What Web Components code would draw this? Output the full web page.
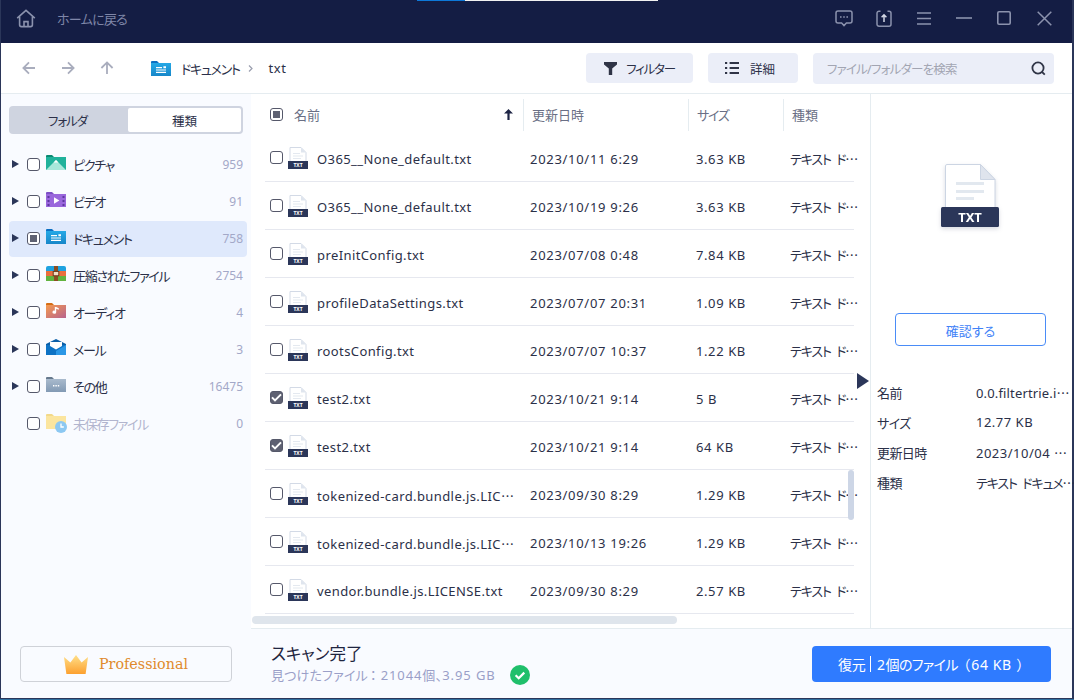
<!DOCTYPE html>
<html lang="ja">
<head>
<meta charset="utf-8">
<title>txt</title>
<style>
  html, body { margin: 0; height: 700px; overflow: hidden; background: #2f6f9f; }
  body {
    font-family: "Noto Sans", "Noto Sans CJK JP", sans-serif; font-size: 13px; color: #2b3048;
    font-feature-settings: "palt";
  }
</style>
</head>
<body>
<app-window>
  <title-bar slot="title"></title-bar>
  <tool-bar slot="tools"></tool-bar>
  <side-pane slot="side">
    <side-item icon="picture" label="ピクチャ" count="959"></side-item>
    <side-item icon="video" label="ビデオ" count="91"></side-item>
    <side-item icon="docs" label="ドキュメント" count="758" active></side-item>
    <side-item icon="zip" label="圧縮されたファイル" count="2754"></side-item>
    <side-item icon="audio" label="オーディオ" count="4"></side-item>
    <side-item icon="mail" label="メール" count="3"></side-item>
    <side-item icon="other" label="その他" count="16475"></side-item>
    <side-item icon="unsaved" label="未保存ファイル" count="0" leaf></side-item>
  </side-pane>
  <file-table slot="table">
    <file-row name="O365__None_default.txt" date="2023/10/11 6:29" size="3.63 KB"></file-row>
    <file-row name="O365__None_default.txt" date="2023/10/19 9:26" size="3.63 KB"></file-row>
    <file-row name="preInitConfig.txt" date="2023/07/08 0:48" size="7.84 KB"></file-row>
    <file-row name="profileDataSettings.txt" date="2023/07/07 20:31" size="1.09 KB"></file-row>
    <file-row name="rootsConfig.txt" date="2023/07/07 10:37" size="1.22 KB"></file-row>
    <file-row name="test2.txt" date="2023/10/21 9:14" size="5 B" checked></file-row>
    <file-row name="test2.txt" date="2023/10/21 9:14" size="64 KB" checked></file-row>
    <file-row name="tokenized-card.bundle.js.LIC⋯" date="2023/09/30 8:29" size="1.29 KB"></file-row>
    <file-row name="tokenized-card.bundle.js.LIC⋯" date="2023/10/13 19:26" size="1.29 KB"></file-row>
    <file-row name="vendor.bundle.js.LICENSE.txt" date="2023/09/30 8:29" size="2.57 KB"></file-row>
  </file-table>
  <detail-pane slot="detail"></detail-pane>
  <scan-footer slot="footer"></scan-footer>
</app-window>

<script>
// todos los iconos en un solo sitio, dibujados a mano
const ICONS = {
  home: `<svg width="20" height="19" viewBox="0 0 20 19" fill="none" stroke="#8b92ad" stroke-width="1.6"><path d="M1.2 9.2 10 1.4l8.8 7.8"/><path d="M3.6 7.6v8.2a1.8 1.8 0 0 0 1.8 1.8h9.2a1.8 1.8 0 0 0 1.8-1.8V7.6"/><path d="M8 17.6v-5h4v5"/></svg>`,
  chat: `<svg width="18" height="17" viewBox="0 0 18 17" fill="none" stroke="#8b92ad" stroke-width="1.5"><path d="M3 1h12a2 2 0 0 1 2 2v8a2 2 0 0 1-2 2h-3.6L9 15.6 6.6 13H3a2 2 0 0 1-2-2V3a2 2 0 0 1 2-2Z"/><path d="M5 7h1.6M8.2 7h1.6M11.4 7H13" stroke-width="1.7"/></svg>`,
  upload: `<svg width="16" height="17" viewBox="0 0 16 17" fill="none" stroke="#8b92ad" stroke-width="1.5"><path d="M4.5 1.2H3A2 2 0 0 0 1 3.2v11a2 2 0 0 0 2 2h10a2 2 0 0 0 2-2v-11a2 2 0 0 0-2-2h-1.500"/><path d="M8 12V5M5.600 7.200 8 4.800l2.400 2.400" stroke="#d5d9e6"/></svg>`,
  menu: `<svg width="14" height="13" viewBox="0 0 14 13" stroke="#8b92ad" stroke-width="1.5"><path d="M0 1h14M0 6.500h14M0 12h14"/></svg>`,
  min: `<svg width="16" height="2" viewBox="0 0 16 2" stroke="#8b92ad" stroke-width="1.6"><path d="M0 1h16"/></svg>`,
  max: `<svg width="14" height="14" viewBox="0 0 14 14" fill="none" stroke="#8b92ad" stroke-width="1.6"><rect x=".8" y=".8" width="12.4" height="12.4" rx="1.2"/></svg>`,
  close: `<svg width="15" height="15" viewBox="0 0 15 15" stroke="#8b92ad" stroke-width="1.5"><path d="m.7.7 13.6 13.6M14.3.7.7 14.3"/></svg>`,
  back: `<svg width="14" height="14" viewBox="0 0 14 14" fill="none" stroke="#a9adbd" stroke-width="1.8"><path d="M13 7H1.500M7 1.400 1.400 7 7 12.600"/></svg>`,
  forward: `<svg width="14" height="14" viewBox="0 0 14 14" fill="none" stroke="#a9adbd" stroke-width="1.8"><path d="M1 7h11.500M7 1.400 12.600 7 7 12.600"/></svg>`,
  up: `<svg width="14" height="14" viewBox="0 0 14 14" fill="none" stroke="#a9adbd" stroke-width="1.8"><path d="M7 13V1.500M1.400 7 7 1.400 12.600 7"/></svg>`,
  chevron: `<svg width="5" height="7" viewBox="0 0 5 7" fill="none" stroke="#9a9eae" stroke-width="1.2"><path d="m1 .5 3 3-3 3"/></svg>`,
  filter: `<svg width="13" height="13" viewBox="0 0 13 13" fill="#2f3446"><path d="M0 0h13v2.600L8.200 6.400V13H4.800V6.400L0 2.600Z"/></svg>`,
  list: `<svg width="14" height="12" viewBox="0 0 14 12" fill="#2f3446"><path d="M0 0h2.200v2H0zM4.600 0H14v2H4.600zM0 5h2.200v2H0zM4.600 5H14v2H4.600zM0 10h2.200v2H0zM4.600 10H14v2H4.600z"/></svg>`,
  search: `<svg width="15" height="15" viewBox="0 0 15 15" fill="none" stroke="#2f3446" stroke-width="1.8"><circle cx="7" cy="7" r="5.600"/><path d="m11 11 2.800 2.600"/></svg>`,
  sort: `<svg width="9" height="11" viewBox="0 0 9 11" fill="#1e2545"><path d="M4.500 0 9 4.600H5.600V11H3.400V4.600H0Z"/></svg>`,
  picture: `<svg width="20" height="15" viewBox="0 0 20 15"><path d="M0 1a1 1 0 0 1 1-1h5l2 2H0Z" fill="#0a8a72"/><path d="M0 2h20v13H0Z" fill="#20b29b"/><path d="M0 15 10 5l10 10Z" fill="#a8e8da"/><path d="m10 5 2.400 2.400H7.600Z" fill="#fff"/></svg>`,
  video: `<svg width="20" height="15" viewBox="0 0 20 15"><path d="M0 1a1 1 0 0 1 1-1h5l2 2H0Z" fill="#7d4fc4"/><path d="M0 2h20v13H0Z" fill="#9a67dc"/><path d="M8 5.200v6.600l5.400-3.300Z" fill="#fff"/><path d="M1.500 4h2v2h-2zM1.500 8h2v2h-2zM1.500 12h2v2h-2zM16.500 4h2v2h-2zM16.500 8h2v2h-2zM16.500 12h2v2h-2z" fill="#5d37a0"/></svg>`,
  docs: `<svg width="20" height="15" viewBox="0 0 20 15"><defs><linearGradient id="d" x1="0" y1="0" x2="0" y2="1"><stop offset="0" stop-color="#25a8e6"/><stop offset="1" stop-color="#1787c9"/></linearGradient></defs><path d="M0 1a1 1 0 0 1 1-1h5l2 2H0Z" fill="#0b6fc2"/><path d="M0 2h20v13H0Z" fill="url(#d)"/><path d="M5 6h6v1.200H5zM5 8.400h10v1.200H5zM5 10.800h10V12H5zM12.400 5.200H15v2h-2.600z" fill="#fff"/></svg>`,
  zip: `<svg width="20" height="15" viewBox="0 0 20 15"><path d="M0 2a2 2 0 0 1 2-2h16a2 2 0 0 1 2 2v3H0Z" fill="#1ea2e0"/><path d="M0 5h20v5H0Z" fill="#e96f3e"/><path d="M0 10h20v5H0Z" fill="#61b33f"/><path d="M8 0h4v15H8Z" fill="#8b4d22"/><rect x="7.200" y="5.400" width="5.600" height="4.400" fill="#f2ddc5" stroke="#6b3a18"/></svg>`,
  audio: `<svg width="20" height="15" viewBox="0 0 20 15"><defs><linearGradient id="a" x1="0" y1="0" x2="1" y2="1"><stop offset="0" stop-color="#f59a4d"/><stop offset="1" stop-color="#b7638f"/></linearGradient></defs><path d="M0 1a1 1 0 0 1 1-1h5l2 2H0Z" fill="#d56d14"/><path d="M0 2h20v13H0Z" fill="url(#a)"/><path d="M10.200 4v5.200a1.900 1.600 0 1 1-1.400-1.500V4Zm0 0 2.600 1.200v1.500l-2.600-1Z" fill="#fff"/></svg>`,
  mail: `<svg width="20" height="16" viewBox="0 0 20 16"><path d="M0 5 10 0l10 5v11H0Z" fill="#0b5fa8"/><path d="M0 6h20v10H0Z" fill="#0d72c4"/><path d="m20 6-10 6v4h10Z" fill="#2b97e6"/><path d="M4 3h12v4l-6 3.400L4 7Z" fill="#fff"/></svg>`,
  other: `<svg width="20" height="15" viewBox="0 0 20 15"><defs><linearGradient id="o" x1="0" y1="0" x2="0" y2="1"><stop offset="0" stop-color="#a9bacd"/><stop offset="1" stop-color="#829ab4"/></linearGradient></defs><path d="M0 1a1 1 0 0 1 1-1h5l2 2H0Z" fill="#66798d"/><path d="M0 2h20v13H0Z" fill="url(#o)"/><path d="M7 8h1.400v1.400H7zM9.400 8h1.400v1.400H9.400zM11.800 8h1.400v1.400h-1.400z" fill="#fff"/></svg>`,
  unsaved: `<svg width="22" height="20" viewBox="0 0 22 20"><path d="M0 1a1 1 0 0 1 1-1h5l2 2H0Z" fill="#f2d98a"/><path d="M0 2h20v13H0Z" fill="#fbe59f"/><circle cx="15" cy="13" r="6" fill="#8cc8f2"/><path d="M15 9.600V13h2.800" fill="none" stroke="#fff" stroke-width="1.3"/></svg>`,
  crown: `<svg width="24" height="19" viewBox="0 0 24 19"><defs><linearGradient id="c" x1="0" y1="0" x2="0" y2="1"><stop offset="0" stop-color="#ffe08a"/><stop offset="1" stop-color="#fca02f"/></linearGradient></defs><path d="M0 2 6.400 7.400 12 0l5.600 7.400L24 2l-2.400 17H2.400Z" fill="url(#c)"/></svg>`,
  ok: `<svg width="20" height="20" viewBox="0 0 20 20"><circle cx="10" cy="10" r="10" fill="#20bf6b"/><path d="m5.600 10.200 3.100 3 5.600-5.600" fill="none" stroke="#fff" stroke-width="2.200"/></svg>`,
  doc: `<svg width="20" height="22" viewBox="0 0 20 22"><path d="M2 .5h11L18 5.500V15H2Z" fill="#fff" stroke="#d3dae6"/><path d="M13 .5V5.500h5Z" fill="#dfe5ee"/><path d="M5 6h7v1H5zM5 8.500h10v1H5zM5 11h8v1H5z" fill="#e4e9f0"/><path d="M0 14h20v8H0Z" fill="#2b3659"/><text x="10" y="20.200" text-anchor="middle" font-size="5" font-weight="700" fill="#fff" font-family="Noto Sans, sans-serif">TXT</text></svg>`
}

class UiIcon extends HTMLElement {
  constructor() {
    super()
    this.attachShadow({ mode: 'open' })
  }

  connectedCallback() {
    const name = this.getAttribute('name')
    this.shadowRoot.innerHTML = `
      <style>
        :host { display: inline-flex; align-items: center; justify-content: center; flex: none; }
        svg { display: block; }
      </style>
      ${ICONS[name] ?? ''}
    `
  }
}

class TickBox extends HTMLElement {
  constructor() {
    super()
    this.attachShadow({ mode: 'open' })
  }

  connectedCallback() {
    const state = this.getAttribute('state') ?? 'off'
    let inner = ''
    if (state === 'mixed') inner = '<i></i>'
    if (state === 'on') inner = '<svg width="11" height="9" viewBox="0 0 11 9" fill="none" stroke="#fff" stroke-width="2"><path d="m1 4.400 3 3 6-6"/></svg>'
    this.shadowRoot.innerHTML = `
      <style>
        :host {
          display: flex; align-items: center; justify-content: center; flex: none;
          width: 13px; height: 13px; box-sizing: border-box;
          border: 1px solid #55586a; border-radius: 3px; background: #fff;
        }
        :host([state="on"]) { background: #5e6172; }
        i { display: block; width: 7px; height: 7px; background: #5e6172; }
      </style>
      ${inner}
    `
  }
}

class AppWindow extends HTMLElement {
  constructor() {
    super()
    this.attachShadow({ mode: 'open' })
  }

  connectedCallback() {
    this.shadowRoot.innerHTML = `
      <style>
        :host {
          display: block; width: 1074px; height: 699px; box-sizing: border-box;
          border-left: 1px solid #2b3659; border-right: 2px solid #2b3659; border-bottom: 1px solid #2b3659;
          background: #fff;
        }
        .frame { display: flex; flex-direction: column; height: 100%; }
        .body { flex: 1; display: flex; min-height: 0; }
        .right { flex: 1; display: flex; flex-direction: column; min-width: 0; }
        .panes { flex: 1; display: flex; min-height: 0; }
      </style>
      <div class="frame">
        <slot name="title"></slot>
        <slot name="tools"></slot>
        <div class="body">
          <slot name="side"></slot>
          <div class="right">
            <div class="panes">
              <slot name="table"></slot>
              <slot name="detail"></slot>
            </div>
            <slot name="footer"></slot>
          </div>
        </div>
      </div>
    `
  }
}

class TitleBar extends HTMLElement {
  constructor() {
    super()
    this.attachShadow({ mode: 'open' })
  }

  connectedCallback() {
    this.shadowRoot.innerHTML = `
      <style>
        :host { display: block; height: 43px; background: #141d44; color: #7f86a8; flex: none; }
        .strip { display: flex; height: 1px; padding-left: 416px; }
        .strip b { width: 48px; background: #0d78d8; }
        .strip u { width: 193px; background: #f2f2f2; }
        .row { display: flex; align-items: center; height: 34px; padding-left: 15px; }
        .home { margin-right: 21px; }
        .row > span { letter-spacing: -.7px; }
        .tools { margin-left: auto; display: flex; align-items: center; }
        .tools ui-icon:nth-child(1) { margin-right: 23px; }
        .tools ui-icon:nth-child(2) { margin-right: 25px; }
        .tools ui-icon:nth-child(3) { margin-right: 25px; }
        .tools ui-icon:nth-child(4) { margin-right: 25px; }
        .tools ui-icon:nth-child(5) { margin-right: 26px; }
        .tools ui-icon:nth-child(6) { margin-right: 20px; }
      </style>
      <div class="strip"><b></b><u></u></div>
      <div class="row">
        <ui-icon class="home" name="home"></ui-icon>
        <span>ホームに戻る</span>
        <div class="tools">
          <ui-icon name="chat"></ui-icon>
          <ui-icon name="upload"></ui-icon>
          <ui-icon name="menu"></ui-icon>
          <ui-icon name="min"></ui-icon>
          <ui-icon name="max"></ui-icon>
          <ui-icon name="close"></ui-icon>
        </div>
      </div>
    `
  }
}

class ToolBar extends HTMLElement {
  constructor() {
    super()
    this.attachShadow({ mode: 'open' })
  }

  connectedCallback() {
    this.shadowRoot.innerHTML = `
      <style>
        :host {
          display: flex; align-items: center; height: 51px; box-sizing: border-box; flex: none;
          border-bottom: 1px solid #e5ecf0; padding-left: 21px; background: #fff;
        }
        .nav { display: flex; gap: 25px; }
        .crumb { display: flex; align-items: center; margin-left: 37px; }
        .crumb span { margin-left: 10px; letter-spacing: -1.3px; }
        .crumb .chev { margin: 0 16px 0 8px; }
        .crumb .leaf { margin-left: 0; letter-spacing: .5px; }
        .btn {
          display: flex; align-items: center; justify-content: center; gap: 9px;
          height: 30px; background: #ebeef8; border-radius: 4px; font-size: 12.5px;
        }
        .filter { width: 107px; margin-left: auto; letter-spacing: -1.2px; }
        .detail { width: 90px; margin-left: 15px; gap: 11px; padding-right: 6px; box-sizing: border-box; }
        .search {
          display: flex; align-items: center; justify-content: space-between;
          width: 241px; height: 31px; box-sizing: border-box; margin: 0 18px 0 15px; padding: 0 8px 0 14px;
          background: #ebeef8; border-radius: 4px; color: #a2a5b2; font-size: 12.5px; letter-spacing: -.8px;
        }
      </style>
      <div class="nav">
        <ui-icon name="back"></ui-icon>
        <ui-icon name="forward"></ui-icon>
        <ui-icon name="up"></ui-icon>
      </div>
      <div class="crumb">
        <ui-icon name="docs"></ui-icon>
        <span>ドキュメント</span>
        <ui-icon class="chev" name="chevron"></ui-icon>
        <span class="leaf">txt</span>
      </div>
      <div class="btn filter"><ui-icon name="filter"></ui-icon><span>フィルター</span></div>
      <div class="btn detail"><ui-icon name="list"></ui-icon><span>詳細</span></div>
      <div class="search"><span>ファイル/フォルダーを検索</span><ui-icon name="search"></ui-icon></div>
    `
  }
}

class SidePane extends HTMLElement {
  constructor() {
    super()
    this.attachShadow({ mode: 'open' })
  }

  connectedCallback() {
    this.shadowRoot.innerHTML = `
      <style>
        :host {
          display: flex; flex-direction: column; flex: none;
          width: 250px; box-sizing: border-box; padding: 12px 4px 16px 8px; background: #f9fbff;
        }
        .tabs {
          display: flex; width: 234px; height: 28px; box-sizing: border-box; padding: 2px;
          background: #cfd4e0; border-radius: 4px; font-size: 12.5px;
        }
        .tabs div { display: flex; align-items: center; justify-content: center; padding-top: 1px; }
        .tabs .off { width: 113px; padding-right: 4px; letter-spacing: -1px; }
        .tabs .on { flex: 1; background: #fff; border-radius: 2px; }
        .items { display: flex; flex-direction: column; gap: 1px; margin-top: 13px; }
        .pro {
          display: flex; align-items: center; gap: 11px;
          margin: auto 0 0 11px; width: 212px; height: 36px; box-sizing: border-box;
          border: 1px solid #cfd2d8; border-radius: 4px; padding-left: 43px;
          font-family: "DejaVu Serif", serif; font-size: 14.3px; color: #e08a2c;
        }
      </style>
      <div class="tabs"><div class="off">フォルダ</div><div class="on">種類</div></div>
      <div class="items"><slot></slot></div>
      <div class="pro"><ui-icon name="crown"></ui-icon><span>Professional</span></div>
    `
  }
}

class SideItem extends HTMLElement {
  constructor() {
    super()
    this.attachShadow({ mode: 'open' })
  }

  connectedCallback() {
    const icon = this.getAttribute('icon')
    const label = this.getAttribute('label')
    const count = this.getAttribute('count')
    const state = this.hasAttribute('active') ? 'mixed' : 'off'
    this.shadowRoot.innerHTML = `
      <style>
        :host {
          display: flex; align-items: center; height: 36px; box-sizing: border-box;
          width: 238px; padding: 0 4px 2px 3px; border-radius: 4px;
        }
        :host([active]) { background: #dfe9fc; }
        :host([leaf]) .label { color: #b2b5ce; }
        :host([leaf]) .arrow { visibility: hidden; }
        .arrow {
          width: 0; height: 0; margin-right: 8px; flex: none;
          border-left: 7px solid #2b3659; border-top: 4px solid transparent; border-bottom: 4px solid transparent;
        }
        .ico { display: flex; width: 20px; margin: 0 7px 4px 6px; flex: none; overflow: visible; }
        :host([icon="unsaved"]) .ico { margin-bottom: -1px; }
        .label { letter-spacing: -1.3px; }
        .count { margin-left: auto; color: #a3a8c8; font-size: 12px; }
      </style>
      <span class="arrow"></span>
      <tick-box state="${state}"></tick-box>
      <span class="ico"><ui-icon name="${icon}"></ui-icon></span>
      <span class="label">${label}</span>
      <span class="count">${count}</span>
    `
  }
}

class FileTable extends HTMLElement {
  constructor() {
    super()
    this.attachShadow({ mode: 'open' })
  }

  connectedCallback() {
    this.shadowRoot.innerHTML = `
      <style>
        :host {
          display: flex; flex-direction: column; position: relative; flex: none;
          width: 620px; box-sizing: border-box; border-right: 1px solid #e5ecf0; background: #fff;
        }
        .head { display: flex; align-items: center; height: 40px; padding-left: 19px; color: #6a6f85; font-size: 13px; flex: none; }
        .head .col { display: flex; align-items: center; height: 32px; box-sizing: border-box; margin-top: 1px; }
        .c-name { width: 240px; padding-left: 11px; justify-content: space-between; padding-right: 10px; box-sizing: border-box; }
        .c-date { width: 165px; padding-left: 8px; border-left: 1px solid #e5ecf0; box-sizing: border-box; }
        .c-size { width: 95px; padding-left: 8px; border-left: 1px solid #e5ecf0; box-sizing: border-box; letter-spacing: -1.2px; }
        .c-type { padding-left: 8px; border-left: 1px solid #e5ecf0; }
        .rows { margin-left: 14px; width: 589px; flex: none; }
        .hbar { width: 425px; height: 8px; margin: 2px 0 0 1px; border-radius: 4px; background: #dfe5ec; flex: none; }
        .vbar { position: absolute; left: 597px; top: 376px; width: 6px; height: 50px; border-radius: 3px; background: #cdd6e6; }
        .expand {
          position: absolute; left: 606px; top: 279px; width: 0; height: 0;
          border-left: 12px solid #2b3659; border-top: 8px solid transparent; border-bottom: 8px solid transparent;
        }
      </style>
      <div class="head">
        <tick-box state="mixed"></tick-box>
        <div class="col c-name"><span>名前</span><ui-icon name="sort"></ui-icon></div>
        <div class="col c-date">更新日時</div>
        <div class="col c-size">サイズ</div>
        <div class="col c-type">種類</div>
      </div>
      <div class="rows"><slot></slot></div>
      <div class="hbar"></div>
      <div class="vbar"></div>
      <div class="expand"></div>
    `
  }
}

class FileRow extends HTMLElement {
  constructor() {
    super()
    this.attachShadow({ mode: 'open' })
  }

  connectedCallback() {
    const name = this.getAttribute('name')
    const date = this.getAttribute('date')
    const size = this.getAttribute('size')
    const state = this.hasAttribute('checked') ? 'on' : 'off'
    this.shadowRoot.innerHTML = `
      <style>
        :host {
          display: flex; align-items: center; height: 48px; box-sizing: border-box;
          padding-left: 5px; border-bottom: 1px solid #e6e8ef;
        }
        ui-icon { margin: 0 9px 0 5px; }
        span { white-space: nowrap; flex: none; padding-top: 1px; }
        .name, .date, .size { padding-top: 3px; }
        .name { width: 213px; letter-spacing: .4px; }
        .date { width: 166px; letter-spacing: .7px; }
        .size { width: 94px; letter-spacing: .6px; }
        .type { width: 64px; letter-spacing: -1.1px; word-spacing: 3px; }
      </style>
      <tick-box state="${state}"></tick-box>
      <ui-icon name="doc"></ui-icon>
      <span class="name">${name}</span>
      <span class="date">${date}</span>
      <span class="size">${size}</span>
      <span class="type">テキスト ド⋯</span>
    `
  }
}

class DetailPane extends HTMLElement {
  constructor() {
    super()
    this.attachShadow({ mode: 'open' })
  }

  connectedCallback() {
    this.shadowRoot.innerHTML = `
      <style>
        :host { display: block; flex: 1; min-width: 0; padding: 70px 0 0 6px; background: #fff; }
        .big { display: flex; justify-content: center; width: 186px; }
        .big svg { display: block; filter: drop-shadow(0 2px 2px rgba(40,50,90,.18)); }
        .confirm {
          display: flex; align-items: center; justify-content: center;
          width: 151px; height: 33px; box-sizing: border-box; margin: 84px 0 31px 18px; padding-top: 1px;
          border: 1px solid #4a8cf7; border-radius: 4px; color: #3f82f7;
        }
        dl { margin: 0; display: grid; grid-template-columns: 99px 92px; grid-auto-rows: 30px; align-items: center; }
        dd, dt { margin: 0; white-space: nowrap; }
        dt { letter-spacing: -.6px; }
        dd.latin { letter-spacing: .5px; }
        dd.tight { letter-spacing: .15px; }
        dd.kana { letter-spacing: -1.1px; word-spacing: 3px; }
      </style>
      <div class="big">
        <svg width="58" height="65" viewBox="0 0 58 65">
          <path d="M6 .5h33.500L54 15.500V46H4.500V2A1.500 1.500 0 0 1 6 .5Z" fill="#fff" stroke="#ccd5e3"/>
          <path d="M39.500.5V15.500H54Z" fill="#dfe4ed" stroke="#ccd5e3"/>
          <path d="M15 18h28v3H15zM15 26h28v3H15zM15 33h18v3H15z" fill="#e2e8ef"/>
          <rect y="43" width="58" height="20" rx="1.500" fill="#2b3659"/>
          <text x="29" y="58" text-anchor="middle" font-size="13" font-weight="700" fill="#fff" font-family="Noto Sans, sans-serif">TXT</text>
        </svg>
      </div>
      <div class="confirm">確認する</div>
      <dl>
        <dt>名前</dt><dd class="tight">0.0.filtertrie.i⋯</dd>
        <dt>サイズ</dt><dd class="latin">12.77 KB</dd>
        <dt>更新日時</dt><dd class="latin">2023/10/04 ⋯</dd>
        <dt>種類</dt><dd class="kana">テキスト ドキュメ⋯</dd>
      </dl>
    `
  }
}

class ScanFooter extends HTMLElement {
  constructor() {
    super()
    this.attachShadow({ mode: 'open' })
  }

  connectedCallback() {
    this.shadowRoot.innerHTML = `
      <style>
        :host {
          display: flex; align-items: center; height: 70px; box-sizing: border-box; flex: none;
          padding: 0 21px 0 20px; background: #f9fbff; border-top: 1px solid #e5ecf0;
        }
        .title { font-size: 16.5px; color: #1f2540; line-height: 22px; }
        .sub { display: flex; align-items: center; gap: 14px; color: #9a9fc8; line-height: 20px; letter-spacing: .2px; }
        .sub b { font-weight: 400; letter-spacing: .9px; }
        .sub .colon { margin: 0 4px 0 2px; }
        .restore {
          display: flex; align-items: center; justify-content: center;
          margin-left: auto; width: 239px; height: 36px; border-radius: 4px;
          background: #2f7bff; color: #fff; font-size: 14px; padding-top: 1px; box-sizing: border-box;
        }
        .restore i { width: 1px; height: 16px; background: #fff; margin: 0 6px 1px 4px; }
        .restore .files { letter-spacing: -.6px; }
        .restore b { font-weight: 400; letter-spacing: .6px; }
        .restore .paren { margin: 0 2px 0 5px; }
      </style>
      <div>
        <div class="title">スキャン完了</div>
        <div class="sub"><span>見つけたファイル<span class="colon">：</span><b>21044</b>個、<b>3.95 GB</b></span><ui-icon name="ok"></ui-icon></div>
      </div>
      <div class="restore"><span>復元</span><i></i><span class="files"><b>2</b>個のファイル<span class="paren">（</span><b>64 KB</b><span class="paren">）</span></span></div>
    `
  }
}

customElements.define('ui-icon', UiIcon)
customElements.define('tick-box', TickBox)
customElements.define('title-bar', TitleBar)
customElements.define('tool-bar', ToolBar)
customElements.define('side-pane', SidePane)
customElements.define('side-item', SideItem)
customElements.define('file-table', FileTable)
customElements.define('file-row', FileRow)
customElements.define('detail-pane', DetailPane)
customElements.define('scan-footer', ScanFooter)
customElements.define('app-window', AppWindow)
</script>
</body>
</html>
